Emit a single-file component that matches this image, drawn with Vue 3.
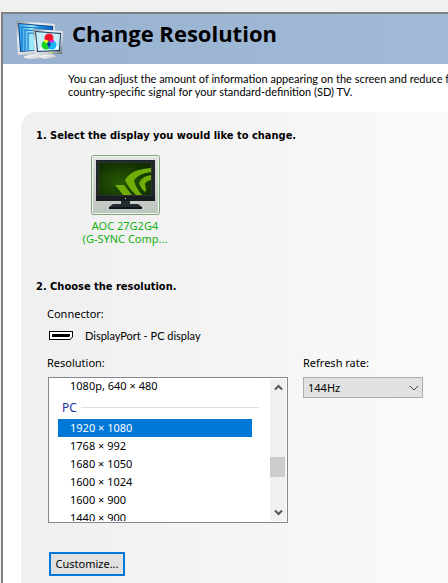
<script setup>
import { ref } from 'vue'

const resolutions = [
    '1920 × 1080',
    '1768 × 992',
    '1680 × 1050',
    '1600 × 1024',
    '1600 × 900',
    '1440 × 900'
]
const selected = ref('1920 × 1080')
const refreshRate = ref('144Hz')
</script>

<template>
    <div class="window">
        <main class="page">
            <header class="title-bar">
                <svg class="title-icon" width="48" height="40" viewBox="0 0 48 40" aria-hidden="true">
                    <defs>
                        <linearGradient id="frame" x1="0" y1="0" x2="1" y2="1">
                            <stop offset="0" stop-color="#8d9298" />
                            <stop offset="0.3" stop-color="#f0f2f4" />
                            <stop offset="0.7" stop-color="#cdd1d5" />
                            <stop offset="1" stop-color="#5c6268" />
                        </linearGradient>
                        <linearGradient id="screen" x1="0" y1="0" x2="1" y2="0">
                            <stop offset="0" stop-color="#2a9ce8" />
                            <stop offset="0.4" stop-color="#a4f0fd" />
                            <stop offset="0.6" stop-color="#2a9ce8" />
                            <stop offset="1" stop-color="#0c62ba" />
                        </linearGradient>
                    </defs>
                    <path d="M7 37l6-3h14l4 3-8 2H11z" fill="url(#frame)" />
                    <path d="M0 1l39 3v28L2 35z" fill="url(#frame)" />
                    <path d="M2 3l35 3v23L4 32z" fill="#0a4694" />
                    <path d="M3 4l33 3v22L5 31z" fill="url(#screen)" />
                    <path d="M6 31V7l30 2M9 31V10l27 2M12 30V13l24 1" fill="none" stroke="#0e6cc4" />
                    <path d="M22 37l6-3h8l5 3-6 2h-7z" fill="url(#frame)" />
                    <path d="M17 9l30 2-1 23-27 1z" fill="url(#frame)" />
                    <path d="M19 11l26 2-1 18-23 1z" fill="#123c60" />
                    <path d="M20 12l24 2-1 16-21 1z" fill="#c4effb" />
                    <path d="M33 13l10 16-20 1z" fill="#fff" />
                    <circle cx="33" cy="18" r="4.500" fill="#f5112b" />
                    <circle cx="30" cy="25" r="4.500" fill="#16d622" />
                    <circle cx="36" cy="25" r="4.500" fill="#16b9f2" />
                    <path d="M28 20q3-1 4 1l-1 2q-3 0-3-3z" fill="#ffee20" />
                    <path d="M38 20q-3-1-4 1l1 2q3 0 3-3z" fill="#df22df" />
                    <path d="M33 21l-2 3 2 4 2-4z" fill="#1640a0" />
                    <path d="M34 32h2v1h-2z" fill="#e6ef20" />
                </svg>
                <h1>Change Resolution</h1>
            </header>
            <p class="intro">
                You can adjust the amount of information appearing on the screen and reduce flicker<br>
                country-specific signal for your standard-definition (SD) TV.
            </p>
            <div class="panel">
                <section>
                    <h2>1. Select the display you would like to change.</h2>
                    <button type="button" class="display">
                        <svg width="69" height="60" viewBox="0 0 69 60" aria-hidden="true">
                            <defs>
                                <linearGradient id="tile" x1="0" y1="0" x2="0" y2="1">
                                    <stop offset="0" stop-color="#e0e3e1" />
                                    <stop offset="1" stop-color="#bcc6bd" />
                                </linearGradient>
                                <radialGradient id="green" cx="0.45" cy="0.6" r="0.7">
                                    <stop offset="0" stop-color="#285a04" />
                                    <stop offset="1" stop-color="#102c03" />
                                </radialGradient>
                                <clipPath id="glass"><path d="M8 8h52v32H8z" /></clipPath>
                            </defs>
                            <rect x="0.5" y="0.5" width="68" height="59" rx="2" fill="url(#tile)" stroke="#7fa678" />
                            <rect x="1.5" y="1.5" width="66" height="57" rx="1" fill="none" stroke="#f1f4f1" />
                            <path d="M5 5h59v41H5z" fill="#20272a" />
                            <path d="M7 7h54v34H7z" fill="#2b3430" />
                            <path d="M8 8h52v32H8z" fill="url(#green)" />
                            <g clip-path="url(#glass)">
                                <path d="M24 32h8l9 10h-8zM35 28q4-13 25-14v5q-15 1-18 9 2 8 8 14h-6q-8-7-9-14z" fill="#173b02" />
                                <path d="M24 30h9l8 10h-9zM34 25q6-11 26-12v4q-14 2-17 9 2 7 8 14h-6q-8-7-11-15z" fill="#70ad06" />
                                <path d="M48 28q3-7 12-8v5q-5 1-6 4l1 6-1 2q-4-3-6-9z" fill="#70ad06" />
                            </g>
                            <path d="M5 41h59v5H5z" fill="#171c20" />
                            <path d="M34 43h1v1h-1z" fill="#eef28a" />
                            <path d="M30 46h9v3h8l4 3v2H18v-2l4-3h8z" fill="#252c31" />
                            <path d="M18 52h33v2H18z" fill="#10161a" />
                        </svg>
                        <span>AOC 27G2G4<br>(G-SYNC Comp...</span>
                    </button>
                </section>
                <section class="resolution">
                    <h2>2. Choose the resolution.</h2>
                    <div class="fields">
                        <p>Connector:</p>
                        <p class="connector">
                            <svg width="24" height="10" viewBox="0 0 24 10" aria-hidden="true">
                                <path d="M0 0h24v6l-3 3H0z" fill="#000" />
                                <path d="M1 1h22v5l-2 2H1z" fill="#fff" />
                                <path d="M3 3h18v2l-1 1H3z" fill="#000" />
                            </svg>
                            <span>DisplayPort - PC display</span>
                        </p>
                        <div class="columns">
                            <div class="column list-column">
                                <span id="resolution-label" class="label">Resolution:</span>
                                <div class="list-box">
                                    <div class="list" role="listbox" aria-labelledby="resolution-label">
                                        <button type="button" role="option" class="option">1080p, 640 × 480</button>
                                        <div class="group">PC</div>
                                        <button
                                            v-for="item in resolutions"
                                            :key="item"
                                            type="button"
                                            role="option"
                                            class="option"
                                            :class="{ selected: item === selected }"
                                            :aria-selected="item === selected"
                                            @click="selected = item"
                                        >{{ item }}</button>
                                    </div>
                                    <div class="scrollbar">
                                        <svg width="9" height="7" viewBox="0 0 9 7"><path d="M1 5.500l3.500-3.500L8 5.500" /></svg>
                                        <div class="track"><div class="thumb"></div></div>
                                        <svg width="9" height="7" viewBox="0 0 9 7"><path d="M1 1.500L4.500 5 8 1.500" /></svg>
                                    </div>
                                </div>
                            </div>
                            <div class="column">
                                <label for="refresh" class="label">Refresh rate:</label>
                                <div class="combo">
                                    <select id="refresh" v-model="refreshRate">
                                        <option>144Hz</option>
                                        <option>120Hz</option>
                                        <option>60Hz</option>
                                    </select>
                                    <svg width="10" height="7" viewBox="0 0 10 7"><path d="M1 1l4 4 4-4" /></svg>
                                </div>
                            </div>
                        </div>
                        <button type="button" class="customize">Customize...</button>
                    </div>
                </section>
            </div>
        </main>
    </div>
</template>

<style>
body {
    background-color: #f0f0f0;
}
</style>

<style scoped>
* {
    box-sizing: border-box;
}
.window {
    display: flex;
    height: 100vh;
    padding: 12px 0 0 1px;
    overflow: hidden;
    font-family: "Noto Sans", "Open Sans", sans-serif;
    font-size: 11px;
    line-height: 13px;
    color: #000;
}
h1, h2, p {
    margin: 0;
}
button, select {
    font: inherit;
    color: inherit;
}
.page {
    flex: 1;
    min-width: 0;
    border: 2px solid #808080;
    border-right: 0;
    border-bottom: 0;
    background-color: #fff;
    overflow: hidden;
}
.title-bar {
    display: flex;
    align-items: flex-start;
    gap: 8px;
    height: 50px;
    padding: 6px 0 0 13px;
    background: linear-gradient(to right, #99b2d1, #a1bad7);
}
h1 {
    font-family: "Open Sans", sans-serif;
    font-size: 22px;
    line-height: 26px;
    white-space: nowrap;
}
.intro {
    padding: 8px 0 14px 65px;
    font-family: Lato, sans-serif;
    white-space: nowrap;
}
.panel {
    height: 100%;
    margin-left: 18px;
    padding: 16px 0 0 15px;
    border-top-left-radius: 16px;
    background: linear-gradient(to right, #efefef, #fafafa);
}
h2 {
    padding-top: 1px;
    font-family: "DejaVu Sans Condensed", "DejaVu Sans", sans-serif;
    font-size: 11px;
    line-height: 14px;
    white-space: nowrap;
}
.display {
    display: flex;
    flex-direction: column;
    align-items: center;
    gap: 4px;
    width: 90px;
    margin: 12px 0 0 44px;
    padding: 0;
    border: 0;
    background: none;
    color: #12b012;
    white-space: nowrap;
}
.resolution {
    margin-top: 34px;
}
.fields {
    padding: 13px 0 0 11px;
}
.connector {
    display: flex;
    align-items: center;
    gap: 12px;
    margin: 9px 0 14px 2px;
    font-family: Lato, sans-serif;
}
.columns {
    display: flex;
    gap: 15px;
}
.column {
    display: flex;
    flex-direction: column;
    align-items: flex-start;
    gap: 8px;
}
.list-column {
    width: 240px;
    margin-left: 1px;
}
.list-column .label {
    margin-left: -1px;
}
.list-box {
    display: flex;
    width: 100%;
    height: 146px;
    padding: 1px;
    border: 1px solid #828790;
    background-color: #fff;
}
.list {
    flex: 1;
    padding: 0 18px 0 8px;
    overflow: hidden;
}
.option {
    display: block;
    width: 100%;
    height: 18px;
    padding: 0 0 0 12px;
    border: 0;
    background: none;
    line-height: 18px;
    text-align: left;
}
/* the list is scrolled slightly past its first visible row */
.option:first-child {
    margin-top: -2px;
}
.option.selected {
    background-color: #0078d7;
    color: #fff;
}
.group {
    display: flex;
    align-items: center;
    gap: 4px;
    height: 24px;
    margin-right: -7px;
    padding-left: 4px;
    font-size: 12px;
    color: #1a3399;
}
.group::after {
    content: "";
    flex: 1;
    height: 1px;
    background-color: #d5dfe8;
}
.scrollbar {
    display: flex;
    flex-direction: column;
    align-items: center;
    width: 16px;
    padding: 5px 0;
    background-color: #f0f0f0;
}
.scrollbar path {
    fill: none;
    stroke: #555;
    stroke-width: 2;
}
.track {
    flex: 1;
    width: 100%;
    padding-top: 66px;
}
.thumb {
    width: 15px;
    height: 20px;
    background-color: #cdcdcd;
}
.combo {
    position: relative;
    width: 120px;
}
.combo select {
    display: block;
    width: 100%;
    height: 21px;
    padding: 0 4px;
    border: 1px solid #adadad;
    border-radius: 0;
    background-color: #e1e1e1;
    appearance: none;
}
.combo svg {
    position: absolute;
    top: 8px;
    right: 4px;
    pointer-events: none;
}
.combo path {
    fill: none;
    stroke: #444;
}
.customize {
    width: 76px;
    height: 24px;
    margin: 29px 0 0 2px;
    padding: 0 0 2px;
    border: 2px solid #0078d7;
    background-color: #e1e1e1;
}
</style>
